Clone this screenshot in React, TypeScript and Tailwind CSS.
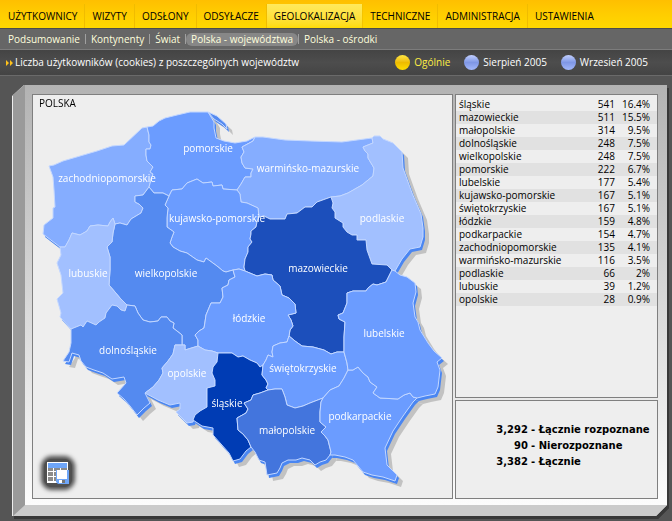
import React from "react";

interface Region {
  name: string;
  color: string;
  label: [number, number];
  points: string;
}

const MENU = [
  "UŻYTKOWNICY",
  "WIZYTY",
  "ODSŁONY",
  "ODSYŁACZE",
  "GEOLOKALIZACJA",
  "TECHNICZNE",
  "ADMINISTRACJA",
  "USTAWIENIA",
];

const SUBMENU = [
  "Podsumowanie",
  "Kontynenty",
  "Świat",
  "Polska - województwa",
  "Polska - ośrodki",
];

const PERIODS = ["Ogólnie", "Sierpień 2005", "Wrzesień 2005"];

const ROWS = [
  ["śląskie", "541", "16.4%"],
  ["mazowieckie", "511", "15.5%"],
  ["małopolskie", "314", "9.5%"],
  ["dolnośląskie", "248", "7.5%"],
  ["wielkopolskie", "248", "7.5%"],
  ["pomorskie", "222", "6.7%"],
  ["lubelskie", "177", "5.4%"],
  ["kujawsko-pomorskie", "167", "5.1%"],
  ["świętokrzyskie", "167", "5.1%"],
  ["łódzkie", "159", "4.8%"],
  ["podkarpackie", "154", "4.7%"],
  ["zachodniopomorskie", "135", "4.1%"],
  ["warmińsko-mazurskie", "116", "3.5%"],
  ["podlaskie", "66", "2%"],
  ["lubuskie", "39", "1.2%"],
  ["opolskie", "28", "0.9%"],
];

const TOTALS = [
  ["3,292", "Łącznie rozpoznane"],
  ["90", "Nierozpoznane"],
  ["3,382", "Łącznie"],
];

const REGIONS: Region[] = [
  {
    name: "zachodniopomorskie",
    color: "#85adff",
    label: [107, 182],
    points:
      "49,166 54,165 63,161 97,151 112,146 124,145 142,128 147,127 149,135 149,142 151,145 150,149 146,149 146,155 147,161 150,164 153,167 150,172 153,174 151,180 149,187 146,191 143,195 135,196 135,202 139,204 143,208 141,213 131,219 127,225 120,223 115,224 113,218 110,222 108,226 98,225 90,226 87,231 80,235 72,233 69,240 65,247 60,247 43,234 44,225 53,218 53,208 55,207 54,190 53,177",
  },
  {
    name: "pomorskie",
    color: "#6b9cff",
    label: [208, 152],
    points:
      "147,127 153,126 159,121 165,118 177,115 190,112 208,112 211,117 214,122 214,128 216,138 224,141 235,143 247,141 255,137 253,141 242,147 244,152 241,157 242,163 245,168 253,169 251,173 251,177 245,177 241,184 237,190 223,189 222,185 213,186 212,182 203,183 197,179 187,183 182,189 172,190 169,196 163,193 154,193 149,187 151,180 153,174 150,172 153,167 150,164 147,161 146,155 146,149 150,149 151,145 149,142 149,135",
  },
  {
    name: "warmińsko-mazurskie",
    color: "#85adff",
    label: [308, 172],
    points:
      "255,137 263,137 285,140 310,141 342,142 372,138 373,143 363,147 365,151 368,154 368,158 374,168 373,176 362,185 348,193 340,196 331,197 317,202 312,207 305,207 297,213 287,214 285,219 270,219 264,216 259,217 258,208 247,203 241,202 240,194 237,190 241,184 245,177 251,177 251,173 253,169 245,168 242,163 241,157 244,152 242,147 253,141",
  },
  {
    name: "podlaskie",
    color: "#a2c0ff",
    label: [382, 222],
    points:
      "372,138 374,136 380,136 383,139 393,143 402,152 403,168 412,193 421,214 423,228 423,237 420,247 410,249 402,259 395,271 392,270 387,265 372,264 367,250 366,240 357,240 357,235 352,235 347,232 343,227 343,223 335,218 335,212 332,208 333,203 331,197 340,196 348,193 362,185 373,176 374,168 368,158 368,154 365,151 363,147 373,143",
  },
  {
    name: "kujawsko-pomorskie",
    color: "#6b9cff",
    label: [217, 222],
    points:
      "169,196 172,190 182,189 187,183 197,179 203,183 212,182 213,186 222,185 223,189 237,190 240,194 241,202 247,203 258,208 259,217 257,222 256,227 251,231 251,234 250,239 252,242 248,247 248,252 245,259 244,267 245,271 239,269 233,270 226,272 223,271 217,266 206,258 204,262 197,260 187,253 180,251 173,247 170,243 172,237 174,232 167,227 167,218 168,208 165,205",
  },
  {
    name: "wielkopolskie",
    color: "#548af0",
    label: [166, 277],
    points:
      "149,187 154,193 163,193 169,196 165,205 168,208 167,218 167,227 174,232 172,237 170,243 173,247 180,251 187,253 197,260 204,262 206,258 217,266 223,271 226,272 233,270 235,277 229,280 228,285 222,288 223,297 220,303 211,303 206,315 205,322 204,328 199,331 195,335 198,340 198,346 185,350 185,345 182,345 182,335 177,331 173,328 174,323 170,321 167,317 161,317 158,321 150,322 143,320 138,313 135,306 127,305 120,298 115,292 109,285 110,270 110,257 107,247 112,242 113,233 115,224 120,223 127,225 131,219 141,213 143,208 139,204 135,202 135,196 143,195 146,191",
  },
  {
    name: "lubuskie",
    color: "#a2c0ff",
    label: [88, 277],
    points:
      "115,224 113,233 112,242 107,247 110,257 110,270 109,285 115,292 120,298 127,305 125,311 121,310 117,306 112,305 106,313 105,318 99,322 96,325 87,321 83,327 81,325 71,329 60,317 61,313 57,299 63,293 61,275 57,263 61,255 60,247 65,247 69,240 72,233 80,235 87,231 90,226 98,225 108,226 110,222 113,218",
  },
  {
    name: "mazowieckie",
    color: "#1c4fbb",
    label: [318, 272],
    points:
      "331,197 333,203 332,208 335,212 335,218 343,223 343,227 347,232 352,235 357,235 357,240 366,240 367,250 372,264 387,265 392,270 386,282 377,285 373,284 368,288 366,291 353,291 347,293 347,303 343,313 338,315 339,319 345,322 344,337 344,352 337,352 331,354 324,350 313,347 302,346 295,341 289,336 290,330 293,326 291,320 288,315 296,313 295,304 289,298 282,295 280,286 273,280 272,275 265,274 257,276 245,271 244,267 245,259 248,252 248,247 252,242 250,239 251,234 251,231 256,227 257,222 259,217 264,216 270,219 285,219 287,214 297,213 305,207 312,207 317,202",
  },
  {
    name: "łódzkie",
    color: "#6b9cff",
    label: [249, 322],
    points:
      "233,270 239,269 245,271 257,276 265,274 272,275 273,280 280,286 282,295 289,298 295,304 296,313 288,315 291,320 293,326 290,330 289,336 287,342 280,343 273,346 272,352 273,357 268,355 266,360 263,365 260,367 257,363 250,360 243,356 238,357 232,353 218,353 212,351 205,350 198,346 198,340 195,335 199,331 204,328 205,322 206,315 211,303 220,303 223,297 222,288 228,285 229,280 235,277",
  },
  {
    name: "dolnośląskie",
    color: "#548af0",
    label: [128, 354],
    points:
      "71,329 81,325 83,327 87,321 96,325 99,322 105,318 106,313 112,305 117,306 121,310 125,311 127,305 135,306 138,313 143,320 150,322 158,321 161,317 167,317 170,321 174,323 173,328 177,331 182,335 182,345 175,345 173,354 168,361 162,368 163,373 159,380 153,387 145,393 150,403 144,408 137,415 130,406 124,399 117,393 126,383 124,377 118,378 112,379 103,373 94,370 86,367 81,361 79,355 72,353 69,362 63,361 69,352 71,343",
  },
  {
    name: "opolskie",
    color: "#a2c0ff",
    label: [187, 377],
    points:
      "175,345 185,345 185,350 198,346 205,350 212,351 218,353 217,362 213,367 212,373 215,380 215,386 207,388 207,400 207,407 200,411 195,415 193,422 187,423 181,417 176,412 180,409 180,403 170,405 158,400 145,393 153,387 159,380 163,373 162,368 168,361 173,354",
  },
  {
    name: "śląskie",
    color: "#003cb4",
    label: [227, 407],
    points:
      "218,353 232,353 238,357 243,356 250,360 257,363 260,367 263,365 262,375 266,380 268,384 266,388 268,390 260,393 253,395 251,400 244,403 248,409 246,413 237,418 238,430 243,434 248,440 251,447 246,451 240,459 233,461 229,453 221,444 213,435 213,428 202,426 193,420 195,415 200,411 207,407 207,400 207,388 215,386 215,380 212,373 213,367 217,362",
  },
  {
    name: "świętokrzyskie",
    color: "#6b9cff",
    label: [303, 372],
    points:
      "289,336 295,341 302,346 313,347 324,350 331,354 337,352 344,352 347,363 348,370 344,378 339,386 330,390 323,398 310,403 303,406 295,408 287,405 285,397 282,389 275,389 268,390 266,388 268,384 266,380 262,375 263,365 266,360 268,355 273,357 272,352 273,346 280,343 287,342",
  },
  {
    name: "małopolskie",
    color: "#4375dd",
    label: [287, 434],
    points:
      "268,390 275,389 282,389 285,397 287,405 295,408 303,406 310,403 323,398 321,402 320,412 320,422 326,427 321,432 325,436 328,440 331,452 330,455 326,460 320,462 315,465 310,460 302,458 296,460 288,460 282,463 280,468 277,473 267,475 265,462 259,460 255,452 251,447 248,440 243,434 238,430 237,418 246,413 248,409 244,403 251,400 253,395 260,393",
  },
  {
    name: "podkarpackie",
    color: "#6b9cff",
    label: [360, 420],
    points:
      "348,370 353,370 358,367 363,373 368,377 370,382 377,387 373,393 380,398 398,399 404,395 410,393 413,397 417,398 413,402 403,416 393,431 385,448 387,465 397,475 395,481 383,477 372,475 363,472 353,460 345,457 335,455 330,455 331,452 328,440 325,436 321,432 326,427 320,422 320,412 321,402 323,398 330,390 339,386 344,378",
  },
  {
    name: "lubelskie",
    color: "#6b9cff",
    label: [384, 337],
    points:
      "392,270 395,271 400,275 407,277 415,283 416,292 413,303 415,317 418,322 420,330 428,343 434,351 442,358 437,362 440,370 438,387 435,394 425,396 417,398 413,397 410,393 404,395 398,399 380,398 373,393 377,387 370,382 368,377 363,373 358,367 353,370 348,370 347,363 344,352 344,337 345,322 339,319 338,315 343,313 347,303 347,293 353,291 366,291 368,288 373,284 377,285 386,282",
  },
];

const HEL = "208,112 217,116 226,124 227,129 222,124 214,119";

const Silhouette = () => (
  <>
    {REGIONS.map((r) => (
      <polygon key={r.name} points={r.points} />
    ))}
    <polygon points={HEL} />
  </>
);

const PolandMap = () => (
  <svg
    viewBox="33 95 419 403"
    className="block w-full h-auto"
    role="img"
    aria-label="Polska - województwa"
  >
    <g transform="translate(6 6)" fill="#c2c2c2">
      <Silhouette />
    </g>
    <g transform="translate(2 3)" fill="#4a86f2">
      <Silhouette />
    </g>
    <g stroke="#c3d7ff" strokeWidth="1" strokeLinejoin="round">
      {REGIONS.map((r) => (
        <polygon key={r.name} points={r.points} fill={r.color} />
      ))}
      <polygon points={HEL} fill="#548af0" />
    </g>
    <g fill="#fff" fontSize="10" textAnchor="middle">
      {REGIONS.map((r) => (
        <text key={r.name} x={r.label[0]} y={r.label[1]}>
          {r.name}
        </text>
      ))}
    </g>
  </svg>
);

const SaveTableIcon = () => (
  <svg width="22" height="22" viewBox="0 0 22 22" aria-hidden="true">
    <rect x="0" y="0" width="21" height="21" fill="#fff" />
    <rect x="1" y="1" width="19" height="5" fill="#6fa6f8" />
    <g fill="#8b8b8b">
      <rect x="1" y="6" width="5" height="3" />
      <rect x="7" y="6" width="6" height="3" />
      <rect x="14" y="6" width="6" height="3" />
      <rect x="1" y="10" width="5" height="4" />
      <rect x="1" y="15" width="5" height="4" />
      <rect x="7" y="10" width="3" height="4" />
      <rect x="7" y="15" width="3" height="4" />
    </g>
    <path d="M9 8h13v14H11l-2-2z" fill="#6fa6f8" />
    <rect x="10" y="8" width="10" height="9" fill="#fff" />
    <rect x="12" y="18" width="6" height="3" fill="#fff" />
    <rect x="15" y="18" width="3" height="3" fill="#777" />
  </svg>
);

const App: React.FC = () => {
  return (
    <div className="min-h-screen bg-[#555555] font-['Open_Sans','Noto_Sans',sans-serif] text-[10px] leading-[13px] text-black">
      <nav className="flex h-7 pt-1 pl-px bg-linear-to-b from-[#ffbf00] via-[#ffcd00] to-[#ffd800]">
        {MENU.map((item) => (
          <a
            key={item}
            href="#"
            className={`flex items-center px-[7px] border-r whitespace-nowrap last:border-r-0 ${
              item === "GEOLOKALIZACJA"
                ? "bg-linear-to-b from-[#ffe95c] to-[#ffdc00] border-[#f5c400]"
                : "border-[#f0bc00]"
            }`}
          >
            {item}
          </a>
        ))}
      </nav>

      <nav className="flex items-center h-[22px] pl-[3px] bg-[#666666] border-t border-b border-t-[#4c4c4c] border-b-[#7c7c7c] text-[#ffffdd]">
        {SUBMENU.map((item) => (
          <div
            key={item}
            className="flex items-center border-r border-[#a0a0a0] h-[10px] last:border-r-0"
          >
            <a
              href="#"
              className={`px-[5px] whitespace-nowrap rounded-md ${
                item === "Polska - województwa" ? "bg-[#878787]" : ""
              }`}
            >
              {item}
            </a>
          </div>
        ))}
      </nav>

      <div className="flex items-center justify-between h-[26px] pl-[6px] pr-6 bg-linear-to-b from-[#444444] via-[#4d4d4d] to-[#444444] border-b border-[#6a6a6a] text-white">
        <h1 className="flex items-center gap-[2px] whitespace-nowrap">
          <svg width="7" height="6" viewBox="0 0 7 6" aria-hidden="true">
            <path d="M0 0l3 3-3 3zM4 0l3 3-3 3z" fill="#ffc21a" />
          </svg>
          Liczba użytkowników (cookies) z poszczególnych województw
        </h1>
        <div className="flex items-center gap-[14px] whitespace-nowrap">
          {PERIODS.map((period, i) => (
            <label
              key={period}
              className="flex items-center gap-1 has-checked:text-[#ffee44]"
            >
              <input
                type="radio"
                name="period"
                defaultChecked={i === 0}
                className="appearance-none size-[15px] rounded-full bg-linear-to-b from-[#c3d0ff] via-[#7f97e6] to-[#a3b8fb] checked:from-[#ffe640] checked:via-[#eebb00] checked:to-[#ffdd00]"
              />
              {period}
            </label>
          ))}
        </div>
      </div>

      <main className="pt-[9px] pl-3 pr-[5px] pb-[5px] drop-shadow-[2px_3px_0_#383838]">
        <div className="bg-[#ededed] pl-px [clip-path:polygon(0_11px,12px_0,100%_0,100%_calc(100%-11px),calc(100%-11px)_100%,0_100%)]">
          <div className="flex gap-[2px] pt-[9px] pl-[7px] pr-[9px] pb-[6px] border-l-12 border-b-11 border-l-[#9a9a9a] border-b-[#cbcbcb] bg-linear-to-b from-[#b3b3b3] to-[#fcfcfc]">
            <section className="relative flex-1 min-w-0 border border-[#7f7f7f] bg-[#eeeeee]">
              <h2 className="absolute top-[2px] left-[6px]">POLSKA</h2>
              <PolandMap />
              <button
                type="button"
                aria-label="Zapisz tabelę"
                className="absolute bottom-[11px] left-[11px] flex items-center justify-center size-7 rounded-lg bg-[#505050] shadow-[0_0_4px_3px_#505050]"
              >
                <SaveTableIcon />
              </button>
            </section>

            <aside className="flex flex-col gap-[2px] w-[203px]">
              <div className="flex-1 pt-[3px] border border-[#7f7f7f] bg-[#eeeeee]">
                <table className="w-full">
                  <tbody>
                    {ROWS.map(([name, count, share]) => (
                      <tr key={name} className="even:bg-[#e1e1e1]">
                        <td className="pl-[3px]">{name}</td>
                        <td className="text-right">{count}</td>
                        <td className="w-[42px] pr-[7px] text-right">{share}</td>
                      </tr>
                    ))}
                  </tbody>
                </table>
              </div>
              <div className="h-[99px] pt-[21px] border border-[#7f7f7f] bg-[#eeeeee] font-['DejaVu_Sans',sans-serif] font-bold leading-4">
                <dl>
                  {TOTALS.map(([value, label]) => (
                    <div key={label} className="flex gap-[3px] whitespace-nowrap">
                      <dt className="order-2">- {label}</dt>
                      <dd className="w-[72px] text-right">{value}</dd>
                    </div>
                  ))}
                </dl>
              </div>
            </aside>
          </div>
        </div>
      </main>
    </div>
  );
};

export default App;
